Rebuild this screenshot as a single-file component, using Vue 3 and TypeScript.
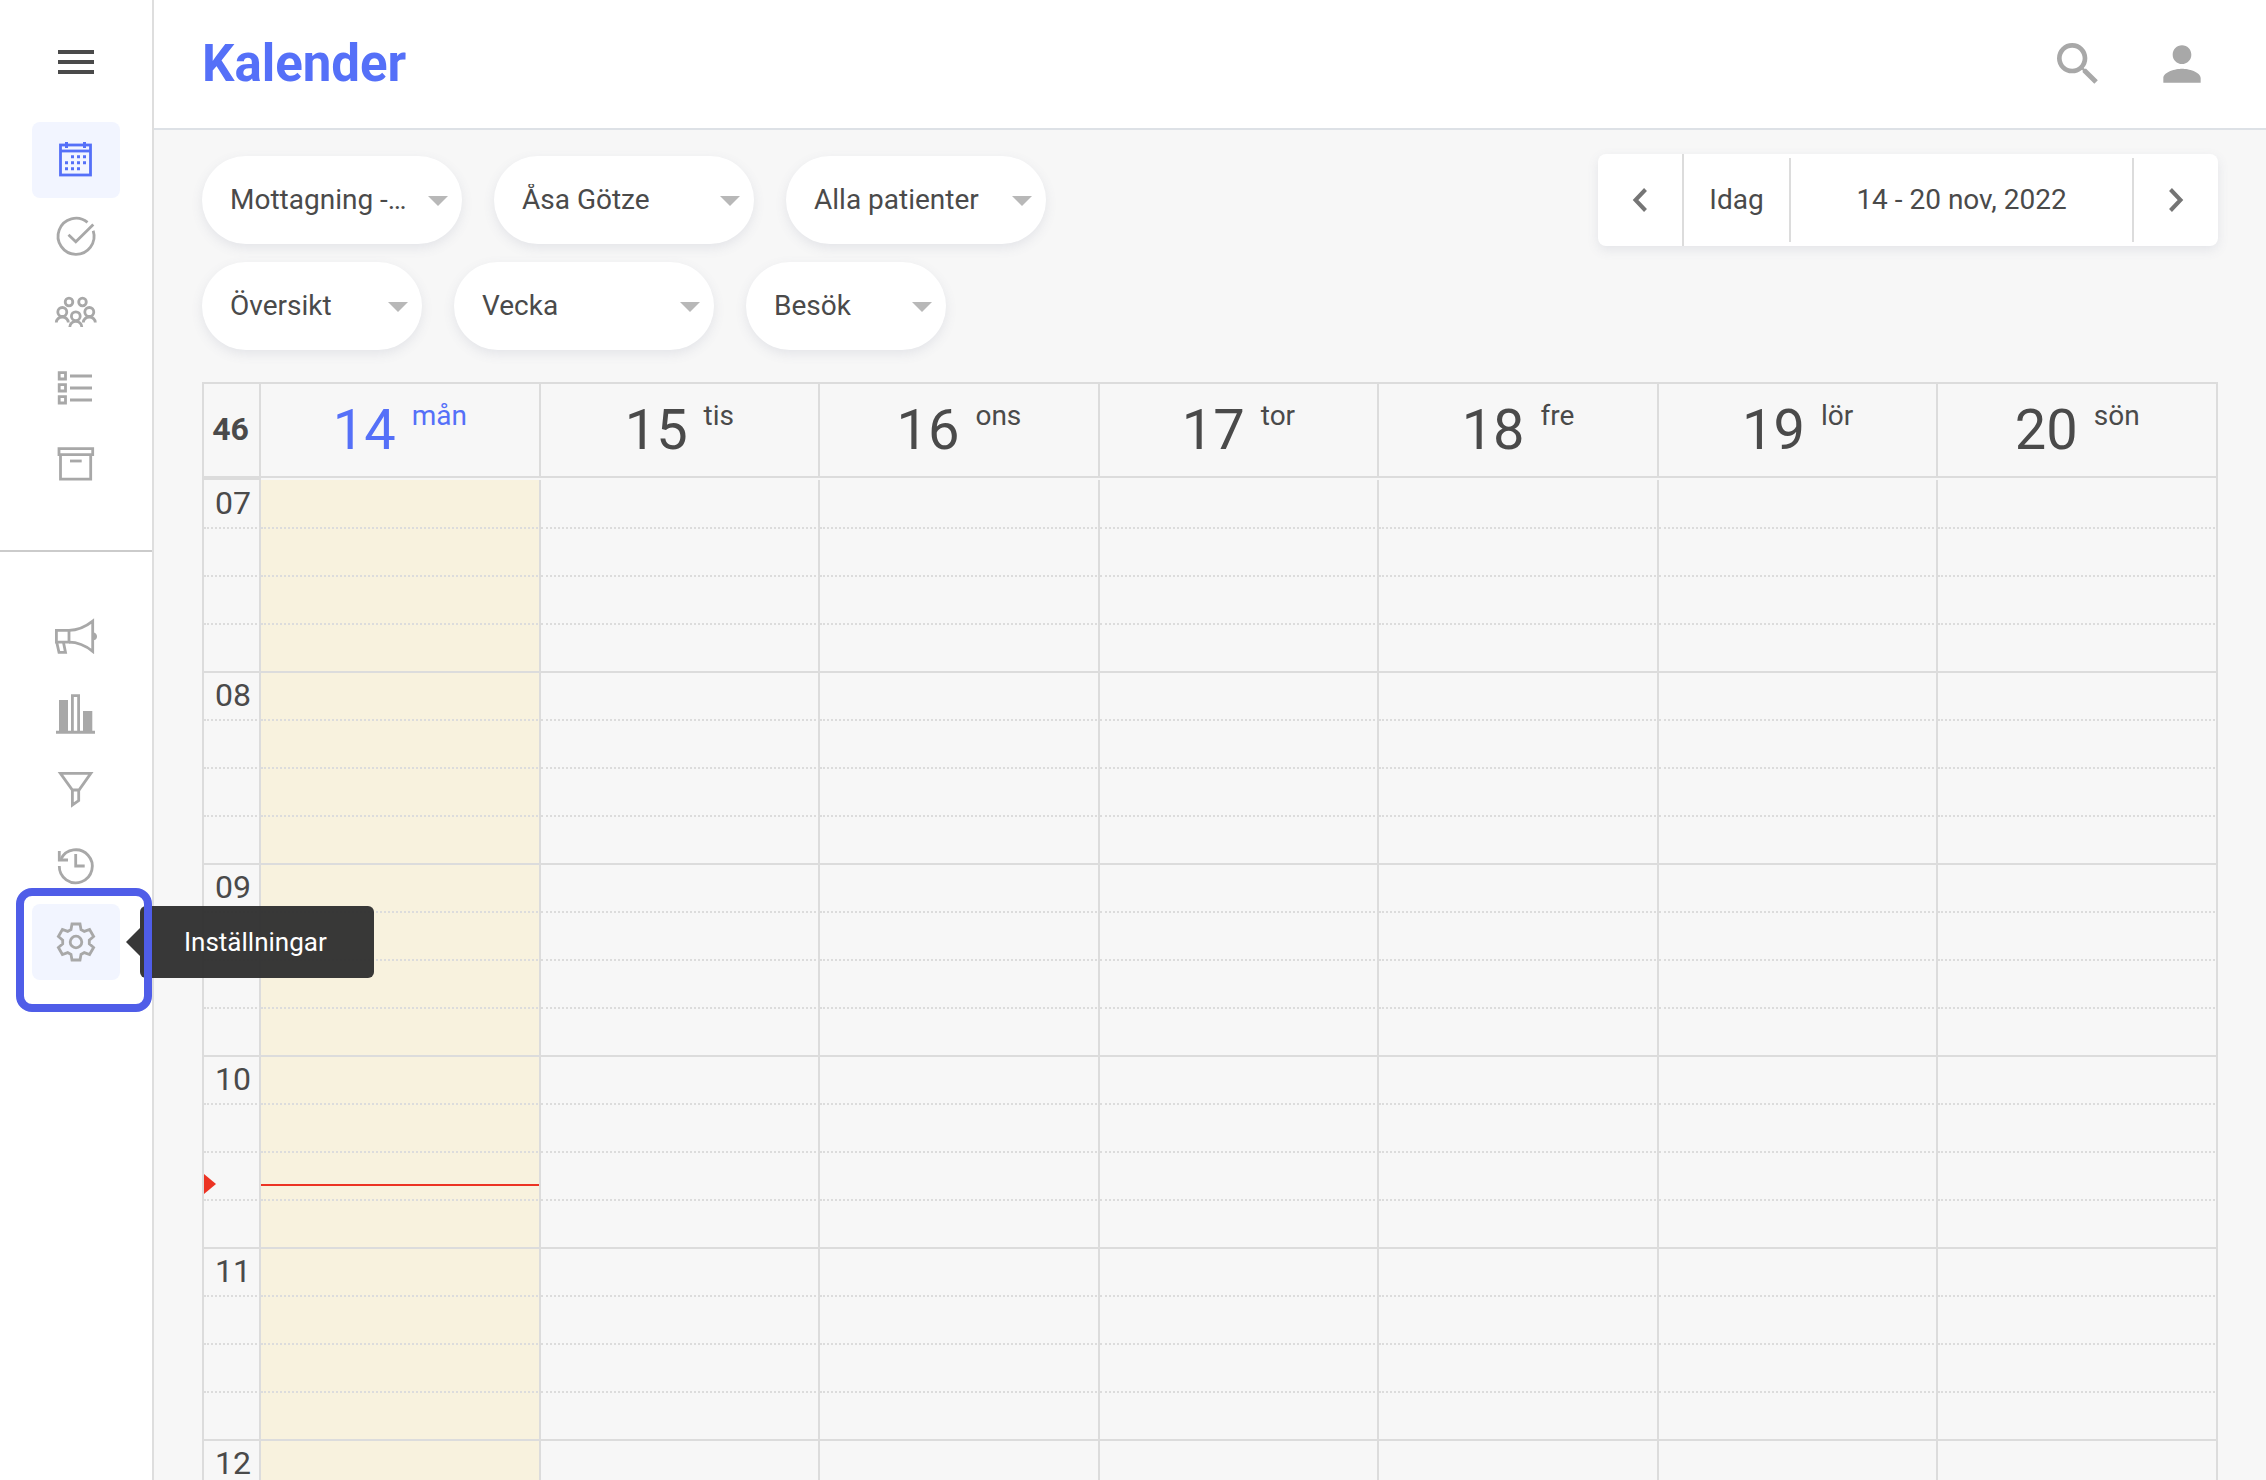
<script setup lang="ts">
import { ref } from 'vue'

interface NavItem {
  id: string
  label: string
}

interface Filter {
  id: string
  label: string
  value: string
  size: 'small' | 'medium' | 'large'
}

interface Day {
  date: number
  name: string
  today?: boolean
}

const mainNav: NavItem[] = [
  { id: 'calendar', label: 'Kalender' },
  { id: 'tasks', label: 'Uppgifter' },
  { id: 'patients', label: 'Patienter' },
  { id: 'lists', label: 'Listor' },
  { id: 'archive', label: 'Arkiv' },
]

const toolNav: NavItem[] = [
  { id: 'campaigns', label: 'Utskick' },
  { id: 'statistics', label: 'Statistik' },
  { id: 'filters', label: 'Filter' },
  { id: 'history', label: 'Historik' },
  { id: 'settings', label: 'Inställningar' },
]

const activeNav = ref('calendar')
const hintedNav = ref('settings')

const filterRows: Filter[][] = [
  [
    { id: 'clinic', label: 'Mottagning', value: 'Mottagning -…', size: 'large' },
    { id: 'caregiver', label: 'Vårdgivare', value: 'Åsa Götze', size: 'large' },
    { id: 'patients', label: 'Patienter', value: 'Alla patienter', size: 'large' },
  ],
  [
    { id: 'view', label: 'Vy', value: 'Översikt', size: 'medium' },
    { id: 'period', label: 'Period', value: 'Vecka', size: 'large' },
    { id: 'type', label: 'Typ', value: 'Besök', size: 'small' },
  ],
]

const week = 46
const days: Day[] = [
  { date: 14, name: 'mån', today: true },
  { date: 15, name: 'tis' },
  { date: 16, name: 'ons' },
  { date: 17, name: 'tor' },
  { date: 18, name: 'fre' },
  { date: 19, name: 'lör' },
  { date: 20, name: 'sön' },
]

const hours = [7, 8, 9, 10, 11, 12]
const quarters = [0, 1, 2, 3]
const now = { hour: 10, minute: 40 }

const isNow = (hour: number, quarter: number): boolean =>
  hour === now.hour && quarter === Math.floor(now.minute / 15)

const nowOffset = { top: `${((now.minute % 15) / 15) * 100}%` }

const pad = (hour: number): string => String(hour).padStart(2, '0')

// Outline of a six-toothed cog centred on 24,24
const cog = Array.from({ length: 6 }, (_, i) => (i * Math.PI) / 3)
  .flatMap((a) =>
    [[-5, -12.5], [-4, -18], [4, -18], [5, -12.5]].map(
      ([x, y]) =>
        `${(24 + x * Math.cos(a) - y * Math.sin(a)).toFixed(1)},${(24 + x * Math.sin(a) + y * Math.cos(a)).toFixed(1)}`,
    ),
  )
  .join(' ')
</script>

<template>
  <div class="app">
    <aside class="sidebar">
      <button class="menu" type="button" aria-label="Meny">
        <span></span><span></span><span></span>
      </button>

      <nav v-for="(group, g) in [mainNav, toolNav]" :key="g" class="nav" :class="{ tools: g === 1 }">
        <div v-for="item in group" :key="item.id" class="nav-item">
          <button
            type="button"
            class="nav-button"
            :class="{ active: activeNav === item.id, hinted: hintedNav === item.id }"
            :aria-label="item.label"
            @click="activeNav = item.id"
          >
            <svg class="icon" viewBox="0 0 48 48" aria-hidden="true">
              <g v-if="item.id === 'calendar'">
                <rect x="8.5" y="9" width="30" height="30" />
                <path d="M8 15H39" />
                <path class="solid" d="M13 6h3v6h-3zM31 6h3v6h-3zM19 19.300h3v3h-3zM25 19.300h3v3h-3zM31 19.300h3v3h-3zM13 25.300h3v3h-3zM19 25.300h3v3h-3zM25 25.300h3v3h-3zM31 25.300h3v3h-3zM13 31.300h3v3h-3zM19 31.300h3v3h-3zM25 31.300h3v3h-3z" />
              </g>
              <g v-else-if="item.id === 'tasks'">
                <path d="M35.500 10.400A18 18 0 1 0 41.200 18.800" />
                <path d="M16.500 22.700L23.800 29.700L41.300 12.500" />
              </g>
              <g v-else-if="item.id === 'patients'">
                <circle cx="17" cy="14" r="3.800" />
                <circle cx="30.500" cy="14" r="3.800" />
                <circle cx="10.300" cy="24" r="4.500" />
                <circle cx="37.300" cy="24" r="4.500" />
                <circle cx="23.800" cy="28.200" r="4.400" />
                <path d="M4.300 34.500C4.300 31.500 7 29 10.300 29S16.300 31.500 16.300 34.500" />
                <path d="M31.300 34.500C31.300 31.500 34 29 37.300 29S43.300 31.500 43.300 34.500" />
                <path d="M17.800 39C17.800 36 20.500 33.300 23.800 33.300S29.800 36 29.800 39" />
              </g>
              <g v-else-if="item.id === 'lists'">
                <path d="M7.200 8.700h6.300v6.300h-6.300zM7.200 20.700h6.300v6.300h-6.300zM7.200 32.700h6.300v6.300h-6.300z" />
                <path d="M18 12H40M18 24H40M18 36H40" />
              </g>
              <g v-else-if="item.id === 'archive'">
                <path d="M7 8.700H40.700V14.600H7z" />
                <path d="M8.500 15V39.200H38.700V15" />
                <path d="M18 21H29.700" />
              </g>
              <g v-else-if="item.id === 'campaigns'">
                <path d="M4.400 16.400H17V28.200H4.400z" />
                <path d="M17 16.400C26 16.400 34 12.500 40.700 7.200V37.400C34 32 26 28.200 17 28.200" />
                <path d="M4.800 28.500L7 38.400H13.500L11.500 28.500" />
                <path class="solid" d="M41 18.500C43.600 18.500 45 20.300 45 22.400S43.600 26.300 41 26.300z" />
              </g>
              <g v-else-if="item.id === 'statistics'">
                <path class="solid" d="M7 10h9v31h-9zM31 21h9.300v20h-9.300zM4 40.700h39v3h-39z" />
                <path d="M20.400 41V5.600H26.600V41" />
              </g>
              <g v-else-if="item.id === 'filters'">
                <path d="M8.400 7.400H38.800L27 24H20.400z" />
                <path d="M20.400 24V39L26.700 34.600V24" />
              </g>
              <g v-else-if="item.id === 'history'">
                <path d="M7.300 24A16.500 16.500 0 1 0 9 17" />
                <path d="M7.300 9V18H16" />
                <path d="M23.700 12V24H32.700" />
              </g>
              <g v-else>
                <polygon :points="cog" />
                <circle cx="24" cy="24" r="5.800" />
              </g>
            </svg>
          </button>
          <template v-if="hintedNav === item.id">
            <span class="tooltip" role="tooltip">{{ item.label }}</span>
            <span class="focus-ring"></span>
          </template>
        </div>
      </nav>
    </aside>

    <div class="page">
      <header class="header">
        <h1>Kalender</h1>
        <div class="header-actions">
          <button type="button" aria-label="Sök">
            <svg viewBox="0 0 24 24" aria-hidden="true">
              <path d="M15.500 14h-.79l-.28-.27A6.471 6.471 0 0 0 16 9.500 6.500 6.500 0 1 0 9.500 16c1.610 0 3.090-.59 4.230-1.570l.27.28v.79l5 4.990L20.490 19l-4.990-5zm-6 0C7.010 14 5 11.990 5 9.500S7.010 5 9.500 5 14 7.010 14 9.500 11.990 14 9.500 14z" />
            </svg>
          </button>
          <button type="button" aria-label="Konto">
            <svg viewBox="0 0 24 24" aria-hidden="true">
              <path d="M12 12c2.210 0 4-1.790 4-4s-1.790-4-4-4-4 1.790-4 4 1.790 4 4 4zm0 2c-2.670 0-8 1.340-8 4v2h16v-2c0-2.660-5.330-4-8-4z" />
            </svg>
          </button>
        </div>
      </header>

      <main class="content">
        <div class="toolbar">
          <div class="filters">
            <div v-for="(row, r) in filterRows" :key="r" class="filter-row">
              <div v-for="filter in row" :key="filter.id" class="filter" :class="filter.size">
                <select :id="`filter-${filter.id}`" :aria-label="filter.label">
                  <option>{{ filter.value }}</option>
                </select>
              </div>
            </div>
          </div>

          <div class="date-picker">
            <button type="button" class="step" aria-label="Föregående vecka">
              <svg viewBox="0 0 16 26" aria-hidden="true"><path d="M13.500 2.500L3.500 13L13.500 23.500" /></svg>
            </button>
            <button type="button" class="today-button">Idag</button>
            <button type="button" class="range">14 - 20 nov, 2022</button>
            <button type="button" class="step" aria-label="Nästa vecka">
              <svg viewBox="0 0 16 26" aria-hidden="true"><path d="M2.500 2.500L12.500 13L2.500 23.500" /></svg>
            </button>
          </div>
        </div>

        <table class="calendar">
          <colgroup>
            <col class="gutter" />
            <col v-for="day in days" :key="day.date" />
          </colgroup>
          <thead>
            <tr>
              <th scope="col" class="week">{{ week }}</th>
              <th v-for="day in days" :key="day.date" scope="col" class="day" :class="{ today: day.today }">
                <div class="day-label">
                  <span class="date">{{ day.date }}</span>
                  <span class="name">{{ day.name }}</span>
                </div>
              </th>
            </tr>
            <tr class="rule">
              <td></td>
              <td colspan="7"></td>
            </tr>
          </thead>
          <tbody v-for="hour in hours" :key="hour">
            <tr v-for="quarter in quarters" :key="quarter">
              <th class="time" scope="row">
                <template v-if="quarter === 0">{{ pad(hour) }}</template>
                <span v-if="isNow(hour, quarter)" class="now-marker" :style="nowOffset"></span>
              </th>
              <td v-for="day in days" :key="day.date" :class="{ today: day.today }">
                <span v-if="day.today && isNow(hour, quarter)" class="now-line" :style="nowOffset"></span>
              </td>
            </tr>
          </tbody>
        </table>
      </main>
    </div>
  </div>
</template>

<style>
body {
  margin: 0;
  background: #f7f7f7;
}
</style>

<style scoped>
.app {
  --ink: #4a4a4a;
  --muted: #a8a8a8;
  --accent: #5570f8;
  --line: #dcdcdc;
  --tint: #f2f5ff;

  display: flex;
  height: 100vh;
  overflow: hidden;
  background: #f7f7f7;
  color: var(--ink);
  font-family: Roboto, "Liberation Sans", sans-serif;
  font-size: 28px;
  line-height: 32px;
}

.app *,
.app *::before,
.app *::after {
  box-sizing: border-box;
}

button,
select {
  margin: 0;
  padding: 0;
  border: 0;
  background: none;
  color: inherit;
  font: inherit;
  cursor: pointer;
}

/* Sidebar */
.sidebar {
  position: relative;
  z-index: 2;
  display: flex;
  flex: none;
  flex-direction: column;
  width: 154px;
  padding-top: 50px;
  border-right: 2px solid #dedede;
  background: #fff;
}

.menu {
  display: flex;
  flex-direction: column;
  align-self: center;
  gap: 6px;
  width: 36px;
  margin-bottom: 48px;
}

.menu span {
  height: 4px;
  background: var(--ink);
}

.nav {
  display: flex;
  flex-direction: column;
  align-items: center;
  padding-bottom: 48px;
}

.nav.tools {
  padding-top: 48px;
  border-top: 2px solid #cbcbcb;
}

.nav-item {
  position: relative;
}

.nav-button {
  display: flex;
  align-items: center;
  justify-content: center;
  width: 88px;
  height: 76px;
  border-radius: 8px;
  color: var(--muted);
}

.nav-button.active,
.nav-button.hinted {
  background: var(--tint);
}

.nav-button.active {
  color: var(--accent);
}

.icon {
  width: 48px;
  height: 48px;
  fill: none;
  stroke: currentColor;
  stroke-width: 2.8;
}

.icon .solid {
  fill: currentColor;
  stroke: none;
}

.tooltip {
  position: absolute;
  top: 2px;
  left: 108px;
  min-width: 234px;
  padding: 20px 44px;
  border-radius: 6px;
  background: rgba(50, 50, 50, 0.97);
  color: #fff;
  font-size: 26px;
  white-space: nowrap;
}

.tooltip::before {
  content: "";
  position: absolute;
  top: 22px;
  right: 100%;
  border: 14px solid transparent;
  border-left: 0;
  border-right-color: rgba(50, 50, 50, 0.97);
}

.focus-ring {
  position: absolute;
  inset: -16px -32px -32px -16px;
  border: 8px solid #4f5de8;
  border-radius: 16px;
  pointer-events: none;
}

/* Header */
.page {
  display: flex;
  flex: 1;
  flex-direction: column;
  min-width: 0;
}

.header {
  display: flex;
  flex: none;
  align-items: center;
  justify-content: space-between;
  height: 130px;
  padding: 0 56px 0 48px;
  border-bottom: 2px solid #dde1e6;
  background: #fff;
}

h1 {
  margin: 0;
  color: var(--accent);
  font-size: 51px;
  font-weight: 700;
  line-height: 64px;
}

.header-actions {
  display: flex;
  gap: 48px;
}

.header-actions button,
.header-actions svg {
  display: block;
  width: 56px;
  height: 56px;
}

.header-actions svg {
  fill: var(--muted);
}

/* Toolbar */
.content {
  padding: 24px 48px 0;
}

.toolbar {
  display: flex;
  align-items: flex-start;
  justify-content: space-between;
  margin-bottom: 32px;
}

.filters {
  display: flex;
  flex-direction: column;
  gap: 18px;
  padding-top: 2px;
}

.filter-row {
  display: flex;
  gap: 32px;
}

.filter {
  position: relative;
}

.filter.small {
  width: 200px;
}

.filter.medium {
  width: 220px;
}

.filter.large {
  width: 260px;
}

.filter select {
  display: block;
  width: 100%;
  height: 88px;
  padding: 0 40px 0 28px;
  border-radius: 44px;
  background: #fff;
  box-shadow: 0 4px 12px rgba(90, 100, 130, 0.12);
  appearance: none;
}

.filter::after {
  content: "";
  position: absolute;
  top: 40px;
  right: 14px;
  border: 10px solid transparent;
  border-top-color: #b8b8b8;
  border-bottom: 0;
  pointer-events: none;
}

.date-picker {
  display: flex;
  align-items: center;
  height: 92px;
  border-radius: 8px;
  background: #fff;
  box-shadow: 0 4px 12px rgba(90, 100, 130, 0.12);
}

.date-picker button {
  height: 84px;
}

.date-picker .step {
  display: flex;
  align-items: center;
  justify-content: center;
  width: 84px;
}

.date-picker .step:first-child {
  width: 86px;
  height: 92px;
  border-right: 2px solid var(--line);
}

.step svg {
  width: 16px;
  height: 26px;
  fill: none;
  stroke: #757575;
  stroke-width: 4;
}

.today-button {
  width: 107px;
  border-right: 2px solid var(--line);
}

.range {
  width: 343px;
  border-right: 2px solid var(--line);
}

/* Calendar */
.calendar {
  width: 100%;
  border: solid var(--line);
  border-width: 2px 0 0 2px;
  border-spacing: 0;
  table-layout: fixed;
}

.calendar .gutter {
  width: 57px;
}

.calendar th,
.calendar td {
  position: relative;
  height: 48px;
  padding: 0;
  border-right: 2px solid var(--line);
  border-bottom: 2px dotted var(--line);
}

.calendar tbody tr:last-child > * {
  border-bottom-style: solid;
}

.calendar tbody:nth-of-type(1) tr:first-child > * {
  height: 49px;
}

.calendar thead th {
  height: 94px;
  border-bottom-style: solid;
}

.calendar .rule td {
  height: 2px;
  border-bottom: 0;
}

.calendar .rule td:first-child {
  background: var(--line);
}

.calendar td.today {
  background: #f8f2de;
}

.calendar .week {
  padding: 0 2px 2px 0;
  font-size: 32px;
  font-weight: 700;
}

.day {
  font-weight: 400;
}

.day.today {
  color: var(--accent);
}

.day-label {
  display: flex;
  align-items: flex-start;
  justify-content: center;
  gap: 16px;
}

.date {
  font-size: 56px;
  line-height: 64px;
}

.name {
  line-height: 36px;
}

.calendar .time {
  padding: 0 8px 2px 0;
  font-size: 32px;
  font-weight: 400;
  text-align: right;
}

.now-line {
  position: absolute;
  right: 0;
  left: 0;
  height: 2px;
  background: #ec3323;
}

.now-marker {
  position: absolute;
  left: 0;
  border: 10px solid transparent;
  border-right: 0;
  border-left: 12px solid #ec3323;
  transform: translateY(-50%);
}
</style>
